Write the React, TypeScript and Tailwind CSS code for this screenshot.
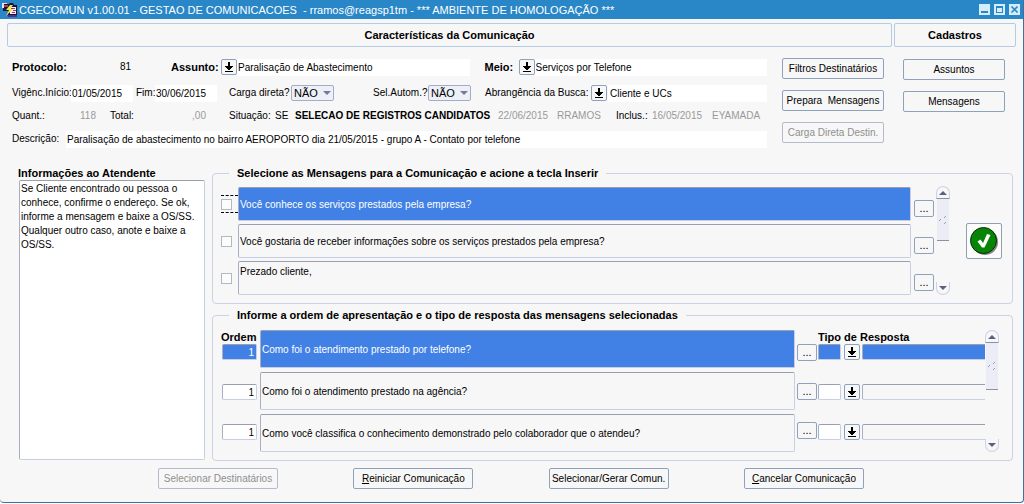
import React from "react";

const box = "rounded-[2px] border border-[#c8cee4] border-t-[#9a9fb0] border-l-[#a9aec2]";
const btn = "rounded-[2px] border border-[#8ea2bd] bg-[#f7f7f7] text-black";
const BLUE = "bg-[#4181e5] text-white";

function DownIcon() {
  return (
    <svg viewBox="0 0 10 11" className="h-[11px] w-[10px]" shapeRendering="crispEdges">
      <path d="M4 0h2v4h3v1h-1v1h-1v1h-1v1h-2v-1h-1v-1h-1v-1h-1v-1h3zM1 9h8v1h-8z" fill="#000" />
    </svg>
  );
}

function LovButton({ label }: { label: string }) {
  return (
    <button aria-label={label} className={`${btn} flex h-4 w-4 shrink-0 items-center justify-center`}>
      <DownIcon />
    </button>
  );
}

function DotsButton({ label }: { label: string }) {
  return (
    <button aria-label={label} className={`${btn} flex h-[17px] w-5 shrink-0 items-center justify-center text-[11px] leading-[17px]`}>
      ...
    </button>
  );
}

function ScrollBar({ thumb }: { thumb: string }) {
  return (
    <div className="flex w-[14px] shrink-0 flex-col">
      <button aria-label="Rolar para cima" className="flex h-[13px] items-center justify-center rounded-t-full border border-[#cdd0e6] border-b-[#8d91a8]">
        <svg viewBox="0 0 8 4" className="h-1 w-2"><path d="M4 0l4 4H0z" fill="#5d6180" /></svg>
      </button>
      <div className={`${thumb} mx-px flex items-center justify-center border-b border-[#8d91a8] bg-[#ececf6]`}>
        <svg viewBox="0 0 8 10" className="h-[10px] w-2" fill="none" stroke="#9a9db5">
          <path d="M5 3l2-2M0 6l2-2M5 9l2-2" />
        </svg>
      </div>
      <div className="flex-1" />
      <button aria-label="Rolar para baixo" className="flex h-[13px] items-center justify-center rounded-b-full border border-t-0 border-[#cdd0e6]">
        <svg viewBox="0 0 8 4" className="h-1 w-2"><path d="M0 0h8L4 4z" fill="#5d6180" /></svg>
      </button>
    </div>
  );
}

function Choice({ id }: { id: string }) {
  return (
    <span className="relative flex h-4 w-[43px] shrink-0 items-center">
      <select id={id} className="h-full w-full appearance-none rounded-[2px] border border-[#a3acc8] bg-[#eef0f8] pl-[2px] text-[11px] leading-[14px]">
        <option>NÃO</option>
        <option>SIM</option>
      </select>
      <svg viewBox="0 0 8 4" className="pointer-events-none absolute right-[3px] h-1 w-2"><path d="M0 0h8L4 4z" fill="#7378a0" /></svg>
    </span>
  );
}

function AppIcon() {
  return (
    <svg viewBox="0 0 16 16" className="h-4 w-4 shrink-0">
      <path d="M1 2h6l1-1h3l1 2h3v11H6V9H1z" fill="#16163c" />
      <path d="M0 1h5v1H2v4H0z" fill="#d8e6f5" />
      <path d="M2 3h4v2H2z" fill="#d0342c" />
      <path d="M8 5h6v7H8z" fill="#f2eef5" />
      <path d="M9 6h4v1H9zM11 8h3v1h-3zM10 10h3v1h-3z" fill="#b03060" />
      <path d="M8 3L4 8h3l-3 6 7-7H8l3-4z" fill="#f4e84a" />
      <path d="M5 13h10v2H6z" fill="#5a2a86" />
    </svg>
  );
}

const messages = [
  "Você conhece os serviços prestados pela empresa?",
  "Você gostaria de receber informações sobre os serviços prestados pela empresa?",
  "Prezado cliente,",
];
const selected = [
  "Como foi o atendimento prestado por telefone?",
  "Como foi o atendimento prestado na agência?",
  "Como você classifica o conhecimento demonstrado pelo colaborador que o atendeu?",
];

const field = "h-[17px] min-w-0 bg-white px-px";
const side = `${btn} h-[21px] w-full`;
const foot = `${btn} h-[21px] w-[120px] whitespace-nowrap`;
const strong = "text-[11px] font-bold";

export default function App() {
  return (
    <div className="flex min-h-screen flex-col bg-white pb-px font-['Liberation_Sans',Arial,sans-serif] text-[10px] leading-[14px] text-black">
      <div className="flex flex-1 flex-col rounded-b-[4px] border-r border-b border-[#3f6f9f] bg-[#f7f7f7]">
        <header className="flex h-[19px] items-center bg-[#2987c8] pr-[3px] pl-[2px] text-white">
          <AppIcon />
          <h1 className="ml-px flex-1 text-[11px] whitespace-pre">
            {"CGECOMUN v1.00.01 - GESTAO DE COMUNICACOES  - rramos@reagsp1tm - *** AMBIENTE DE HOMOLOGAÇÃO ***"}
          </h1>
          <div className="flex gap-1">
            <button aria-label="Minimizar">
              <svg viewBox="0 0 11 11" className="size-[11px]"><path d="M0 0h11v11H0z" fill="#d5ecfa" /><path d="M2 7h7v2H2z" fill="#2987c8" /></svg>
            </button>
            <button aria-label="Maximizar">
              <svg viewBox="0 0 11 11" className="size-[11px]"><path d="M0 0h11v11H0z" fill="#d5ecfa" /><path d="M2 2h7v7H2zM3 4v4h5V4z" fillRule="evenodd" fill="#2987c8" /></svg>
            </button>
            <button aria-label="Fechar">
              <svg viewBox="0 0 11 11" className="size-[11px]"><path d="M0 0h11v11H0z" fill="#d5ecfa" /><path d="M2.500 2.500l6 6M8.500 2.500l-6 6" fill="none" stroke="#2987c8" strokeWidth="1.700" /></svg>
            </button>
          </div>
        </header>

        <div className={`mt-1 flex gap-[2px] px-[7px] text-center ${strong}`}>
          <h2 className="h-6 flex-1 rounded-[2px] border border-[#b5cbe4] leading-[22px]">Características da Comunicação</h2>
          <h2 className="h-6 w-[122px] rounded-[2px] border border-[#b5cbe4] leading-[22px]">Cadastros</h2>
        </div>

        <div className="flex pr-[18px] pl-3">
          <div className="mt-[11px] flex min-w-0 flex-1 flex-col">
            <div className="flex h-[18px] items-center">
              <span className={`w-[79px] ${strong}`}>Protocolo:</span>
              <span className="w-10 text-right">81</span>
              <label htmlFor="assunto" className={`ml-10 w-[50px] shrink-0 ${strong}`}>Assunto:</label>
              <LovButton label="Lista de assuntos" />
              <input id="assunto" className={`${field} flex-1`} defaultValue="Paralisação de Abastecimento" />
              <label htmlFor="meio" className={`ml-[15px] w-[34px] shrink-0 ${strong}`}>Meio:</label>
              <LovButton label="Lista de meios" />
              <input id="meio" className={`${field} flex-1`} defaultValue="Serviços por Telefone" />
            </div>
            <div className="mt-2 flex h-[18px] items-center">
              <label htmlFor="ini" className="w-[59px] shrink-0 whitespace-nowrap">Vigênc.Início:</label>
              <input id="ini" className={`${field} w-[62px]`} defaultValue="01/05/2015" />
              <label htmlFor="fim" className="ml-[3px] w-[19px] shrink-0 whitespace-nowrap">Fim:</label>
              <input id="fim" className={`${field} w-[62px]`} defaultValue="30/06/2015" />
              <label htmlFor="carga" className="ml-3 w-[62px] shrink-0 whitespace-nowrap">Carga direta?</label>
              <Choice id="carga" />
              <span className="flex-1" />
              <label htmlFor="autom" className="w-[55px] shrink-0 whitespace-nowrap">Sel.Autom.?</label>
              <Choice id="autom" />
              <label htmlFor="busca" className="ml-[14px] w-[106px] shrink-0 whitespace-nowrap">Abrangência da Busca:</label>
              <LovButton label="Lista de abrangências" />
              <input id="busca" className={`${field} ml-px flex-[4] pl-[2px]`} defaultValue="Cliente e UCs" />
            </div>
            <div className="mt-[5px] flex h-[18px] items-center whitespace-nowrap">
              <span className="w-11">Quant.:</span>
              <span className="w-10 text-right text-[#9a9a9a]">118</span>
              <span className="ml-[14px] w-12">Total:</span>
              <span className="w-12 text-right text-[#9a9a9a]">,00</span>
              <span className="ml-[23px] w-[46px]">Situação:</span>
              <span className="w-5">SE</span>
              <span className="w-[203px] font-bold">SELECAO DE REGISTROS CANDIDATOS</span>
              <span className="w-[59px] text-[#9a9a9a]">22/06/2015</span>
              <span className="w-[59px] text-[#9a9a9a]">RRAMOS</span>
              <span className="w-9">Inclus.:</span>
              <span className="w-[60px] text-[#9a9a9a]">16/05/2015</span>
              <span className="text-[#9a9a9a]">EYAMADA</span>
            </div>
            <div className="mt-[5px] flex h-[18px] items-center">
              <label htmlFor="desc" className="w-[54px] shrink-0">Descrição:</label>
              <input id="desc" className={`${field} flex-1`} defaultValue="Paralisação de abastecimento no bairro AEROPORTO dia 21/05/2015 - grupo A - Contato por telefone" />
            </div>
          </div>
          <div className="mt-[11px] ml-[15px] flex w-[102px] shrink-0 flex-col gap-[11px] whitespace-pre">
            <button className={side}>Filtros Destinatários</button>
            <button className={side}>{"Prepara  Mensagens"}</button>
            <button disabled className="h-[21px] w-full rounded-[2px] border border-[#b4bccb] text-[#8f8f8f]">Carga Direta Destin.</button>
          </div>
          <div className="mt-[12px] ml-[19px] flex w-[102px] shrink-0 flex-col gap-[11px]">
            <button className={side}>Assuntos</button>
            <button className={side}>Mensagens</button>
          </div>
        </div>

        <main className="mt-[18px] flex flex-1 gap-[7px] pr-[10px] pl-[19px]">
          <div className="flex w-[186px] shrink-0 flex-col pb-[2px]">
            <label htmlFor="info" className={`-ml-px leading-[14px] ${strong}`}>Informações ao Atendente</label>
            <textarea
              id="info"
              className={`${box} flex-1 resize-none bg-white px-px py-px`}
              defaultValue="Se Cliente encontrado ou pessoa o conhece, confirme o endereço. Se ok, informe a mensagem e baixe a OS/SS. Qualquer outro caso, anote e baixe a OS/SS."
            />
          </div>

          <div className="flex min-w-0 flex-1 flex-col gap-1">
            <fieldset className="flex min-w-0 rounded-[4px] border border-[#ccd1e6] pr-[10px] pb-2 pl-2">
              <legend className={`ml-2 px-2 ${strong}`}>Selecione as Mensagens para a Comunicação e acione a tecla Inserir</legend>
              <div className="flex min-w-0 flex-1 items-center">
                <div className="flex min-w-0 flex-1 flex-col gap-[3px] pt-[7px]">
                  {messages.map((m, i) => (
                    <div key={m} className="flex items-center">
                      <span className={i === 0 ? "flex h-[18px] w-[17px] shrink-0 items-center border-y border-dashed border-black" : "flex w-[17px] shrink-0 items-center"}>
                        <input type="checkbox" aria-label={m} className="size-[11px] appearance-none border border-[#b3b7c6] bg-[#fcfcfc]" />
                      </span>
                      <input
                        aria-label={`Mensagem ${i + 1}`}
                        readOnly
                        defaultValue={m}
                        className={`${box} h-[34px] min-w-0 flex-1 px-px ${i === 0 ? BLUE : ""} ${i === 2 ? "pb-[14px]" : ""}`}
                      />
                      <span className="ml-[3px] flex pt-2"><DotsButton label={`Detalhes da mensagem ${i + 1}`} /></span>
                    </div>
                  ))}
                </div>
                <div className="ml-[2px] flex self-stretch pt-[6px]"><ScrollBar thumb="h-[42px]" /></div>
                <button aria-label="Inserir" className="mt-[7px] ml-4 flex size-9 shrink-0 items-center justify-center rounded-[2px] border border-[#8fa0b4] bg-[#fcfcfc]">
                  <svg viewBox="0 0 30 30" className="size-[30px]">
                    <circle cx="16" cy="16" r="13" fill="#858585" />
                    <circle cx="14.500" cy="14.500" r="13" fill="#068406" stroke="#052c05" />
                    <path d="M8.500 15.500l3-2 2.500 3.500 4-9 3.500 1-6 12.500h-2.500z" fill="#fff" />
                  </svg>
                </button>
              </div>
            </fieldset>

            <fieldset className="min-w-0 rounded-[4px] border border-[#ccd1e6] pr-[13px] pb-2 pl-2">
              <legend className={`ml-2 px-2 ${strong}`}>Informe a ordem de apresentação e o tipo de resposta das mensagens selecionadas</legend>
              <div className="flex pt-2">
                <div className="flex w-[37px] shrink-0 flex-col">
                  <span className={strong}>Ordem</span>
                  <div className="flex flex-col gap-6">
                    {selected.map((m, i) => (
                      <input key={m} aria-label={`Ordem ${i + 1}`} defaultValue="1" className={`${box} ml-px h-4 w-[35px] pr-[2px] text-right ${i === 0 ? BLUE : "bg-white"}`} />
                    ))}
                  </div>
                </div>
                <div className="ml-[2px] flex min-w-0 flex-1 flex-col gap-1">
                  {selected.map((m, i) => (
                    <input key={m} aria-label={`Mensagem selecionada ${i + 1}`} readOnly defaultValue={m} className={`${box} h-[38px] w-full px-px ${i === 0 ? BLUE : ""}`} />
                  ))}
                </div>
                <div className="ml-[2px] flex flex-col gap-[22px] pt-[14px]">
                  {selected.map((m, i) => (
                    <DotsButton key={m} label={`Detalhes da mensagem selecionada ${i + 1}`} />
                  ))}
                </div>
                <div className="ml-px flex w-[167px] shrink-0 flex-col">
                  <span className={strong}>Tipo de Resposta</span>
                  <div className="flex flex-col gap-6">
                    {selected.map((m, i) => (
                      <div key={m} className="flex">
                        <input aria-label={`Código do tipo ${i + 1}`} className={`${box} h-4 w-[23px] ${i === 0 ? BLUE : "bg-white"}`} />
                        <span className="mr-[2px] ml-[3px] flex"><LovButton label={`Lista de tipos ${i + 1}`} /></span>
                        <input aria-label={`Tipo de resposta ${i + 1}`} readOnly className={`${box} h-4 min-w-0 flex-1 rounded-r-none border-r-0 ${i === 0 ? BLUE : ""}`} />
                      </div>
                    ))}
                  </div>
                </div>
                <ScrollBar thumb="h-[47px]" />
              </div>
            </fieldset>
          </div>
        </main>

        <footer className="mt-[6px] mb-[13px] flex justify-between pr-[159px] pl-[158px]">
          <button disabled className="h-[21px] w-[120px] rounded-[2px] border border-[#b4bccb] whitespace-nowrap text-[#8f8f8f]">Selecionar Destinatários</button>
          <button className={foot}><u>R</u>einiciar Comunicação</button>
          <button className={foot}>Selecionar/Gerar Comun.</button>
          <button className={foot}><u>C</u>ancelar Comunicação</button>
        </footer>
      </div>
    </div>
  );
}
